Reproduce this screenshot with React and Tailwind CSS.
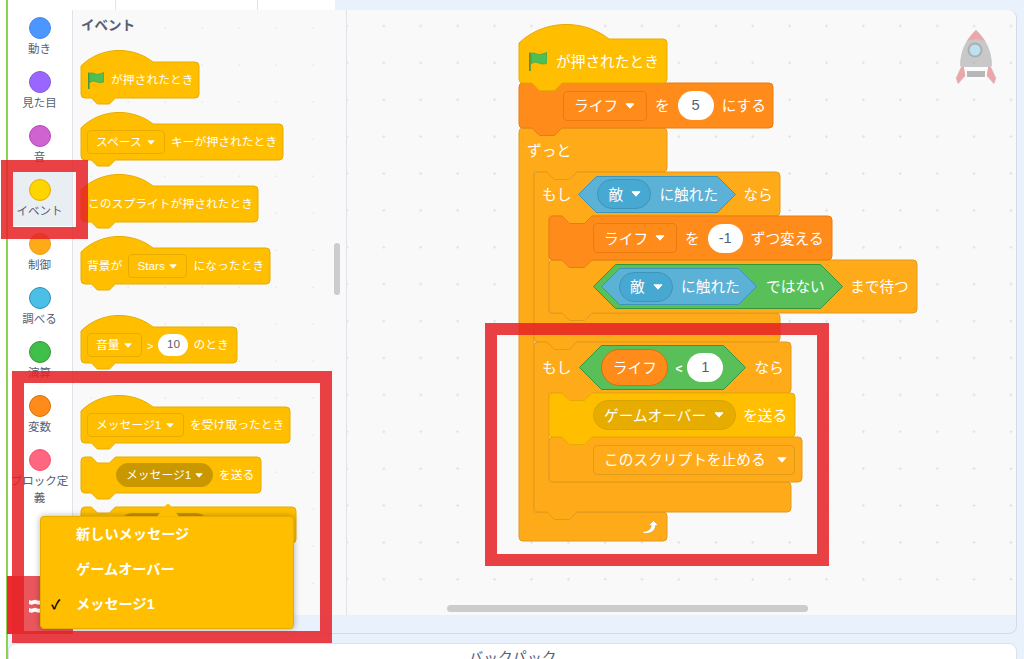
const blockPath = ({ w, h, s = 1, hat, notchTop = true, notchBottom = true, arm }) => {
  const r = 4;
  const nx = 13 * s;
  const nd = 7.5 * s;
  const nf = 15 * s;
  let d = "";
  if (hat) {
    d += `M0 ${r} C${25 * s} ${-20 * s} ${65 * s} ${-20 * s} ${90 * s} 0 `;
  } else {
    d += `M0 ${r} Q0 0 ${r} 0 `;
    if (notchTop) d += `H${nx} l${nd} ${nd} h${nf} l${nd} ${-nd} `;
  }
  d += `H${w - r} Q${w} 0 ${w} ${r} `;
  if (arm) {
    const i = arm.inner;
    d += `V${arm.top - r} Q${w} ${arm.top} ${w - r} ${arm.top} `;
    d += `H${i + nx + nd * 2 + nf} l${-nd} ${nd} h${-nf} l${-nd} ${-nd} H${i} `;
    d += `V${arm.bottom} H${w - r} Q${w} ${arm.bottom} ${w} ${arm.bottom + r} `;
  }
  d += `V${h - r} Q${w} ${h} ${w - r} ${h} `;
  if (notchBottom) d += `H${nx + nd * 2 + nf} l${-nd} ${nd} h${-nf} l${-nd} ${-nd} `;
  d += `H${r} Q0 ${h} 0 ${h - r} Z`;
  return d;
};

const Block = ({ cls, w, h, s, fill, stroke, hat, notchTop, notchBottom, arm, row, children }) => (
  <div className={`absolute ${cls}`}>
    <svg className="absolute left-0 top-0 overflow-visible" width={w} height={h}>
      <path
        d={blockPath({ w, h, s, hat, notchTop, notchBottom, arm })}
        fill={fill}
        stroke={stroke}
        strokeWidth="1"
      />
    </svg>
    <div className={`relative flex items-center whitespace-nowrap text-white [&_span]:pt-[2px] ${row}`}>
      {children}
    </div>
  </div>
);

const EVENT = { fill: "#ffbf00", stroke: "#e6ac00" };
const CONTROL = { fill: "#ffab19", stroke: "#e09a1c" };
const VARIABLE = { fill: "#ff8c1a", stroke: "#e87c10" };

const Caret = ({ small }) => (
  <svg width={small ? 8 : 10} height={small ? 5 : 6} viewBox="0 0 10 6" className="shrink-0">
    <path d="M1 0.8 H9 L5 5.2 Z" fill="#fff" stroke="#fff" strokeWidth="1" strokeLinejoin="round" />
  </svg>
);

const Flag = ({ cls }) => (
  <svg viewBox="0 0 18 19" className={`shrink-0 ${cls}`}>
    <path d="M0 0.5 H1.8 V19 H0 Z" fill="#45993d" />
    <path
      d="M2 1.5 C5 -0.5 8 3 11 2.5 C14 2 16 1 18 0.5 V11 C14 13 11 11.5 8 10.5 C6 10 3.5 10.5 2 12 Z"
      fill="#4cbf56"
      stroke="#45993d"
      strokeWidth="0.6"
    />
  </svg>
);

const Drop = ({ label, cls, small, border = "border-[#e6ac00]" }) => (
  <div className={`flex shrink-0 items-center justify-between rounded-[4px] border ${border} ${cls}`}>
    <span>{label}</span>
    <Caret small={small} />
  </div>
);

const Oval = ({ label, cls, small }) => (
  <div className={`flex shrink-0 items-center justify-between rounded-full border ${cls}`}>
    <span>{label}</span>
    <Caret small={small} />
  </div>
);

const Num = ({ value, cls }) => (
  <div className={`flex shrink-0 items-center justify-center rounded-full bg-white text-[#575e75] ${cls}`}>
    {value}
  </div>
);

const Hex = ({ w, h, fill, stroke, cls, children }) => (
  <div className={`relative flex shrink-0 items-center ${cls}`}>
    <svg className="absolute left-0 top-0" width={w} height={h}>
      <path
        d={`M0.5 ${h / 2} L${h / 2} 0.5 H${w - h / 2} L${w - 0.5} ${h / 2} L${w - h / 2} ${h - 0.5} H${h / 2} Z`}
        fill={fill}
        stroke={stroke}
      />
    </svg>
    <div className="relative flex items-center">{children}</div>
  </div>
);

const TouchEnemy = () => (
  <>
    <Oval label="敵" cls="h-[30px] w-[54px] border-[#3d95bc] bg-[#47a8d1] pl-[10px] pr-[9px]" />
    <span className="ml-[8px]">に触れた</span>
  </>
);

const categories = [
  ["動き", "bg-[#4c97ff]", "border-[#3f87eb]"],
  ["見た目", "bg-[#9966ff]", "border-[#855cd6]"],
  ["音", "bg-[#cf63cf]", "border-[#bd42bd]"],
  ["イベント", "bg-[#ffd500]", "border-[#e6ac00]"],
  ["制御", "bg-[#ffab19]", "border-[#ec9c13]"],
  ["調べる", "bg-[#4cbfe6]", "border-[#2e8eb8]"],
  ["演算", "bg-[#40bf4a]", "border-[#389438]"],
  ["変数", "bg-[#ff8c1a]", "border-[#db6e00]"],
  ["ブロック定義", "bg-[#ff6680]", "border-[#ff4d6a]"],
];

const Sidebar = () => (
  <div className="relative flex w-[64px] shrink-0 flex-col items-center bg-white text-[11.5px] leading-[17px] text-[#575e75]">
    {categories.map(([label, bg, border]) => (
      <div
        key={label}
        className={`flex h-[54px] w-full shrink-0 flex-col items-center pr-[1px] pt-[7px] ${
          label === "イベント" ? "bg-[#e9eef2]" : ""
        }`}
      >
        <div className={`h-[22px] w-[22px] shrink-0 rounded-full border ${bg} ${border}`} />
        <span className="mt-[2px] w-[62px] text-center">{label}</span>
      </div>
    ))}
    {/* extension button */}
    <div className="absolute bottom-[-1px] left-[-1px] flex h-[58px] w-[66px] items-center border-l-[5px] border-[#ee2a30] bg-[#e9575c] pl-[16px] pt-[3px]">
      <svg width="14" height="15" viewBox="0 0 14 15">
        <path d="M1 1 C4 3 6 0 8 1 C10 2 12 2 13 1 V5 C10 7 8 4 6 5 C4 6 3 6 1 5 Z" fill="#fff" />
        <path d="M1 9 C4 11 6 8 8 9 C10 10 12 10 13 9 V13 C10 15 8 12 6 13 C4 14 3 14 1 13 Z" fill="#fff" />
      </svg>
    </div>
  </div>
);

const Palette = () => (
  <div className="relative w-[275px] shrink-0 border-x border-[#dfe3ea] bg-[#f9f9f9] bg-[radial-gradient(#ececec_1px,transparent_1px)] bg-[size:37px_37px] text-[11.8px]">
    <h2 className="pl-[8px] pt-[6px] text-[13.5px] font-bold leading-[20px] text-[#575e75]">イベント</h2>

    <Block cls="left-[8px] top-[52px]" w={118} h={36} s={0.8} hat {...EVENT} row="h-[36px] pl-[7px] gap-[7px]">
      <Flag cls="h-[17px] w-[16px]" />
      <span>が押されたとき</span>
    </Block>

    <Block cls="left-[8px] top-[114px]" w={202} h={36} s={0.8} hat {...EVENT} row="h-[36px] pl-[6px] gap-[6px]">
      <Drop small label="スペース" cls="h-[24px] w-[78px] pl-[8px] pr-[9px]" />
      <span>キーが押されたとき</span>
    </Block>

    <Block cls="left-[8px] top-[176px]" w={177} h={36} s={0.8} hat {...EVENT} row="h-[36px] pl-[7px]">
      <span>このスプライトが押されたとき</span>
    </Block>

    <Block cls="left-[8px] top-[238px]" w={189} h={36} s={0.8} hat {...EVENT} row="h-[36px] pl-[6px] gap-[6px]">
      <span>背景が</span>
      <Drop small label="Stars" cls="h-[24px] w-[59px] pl-[8px] pr-[9px]" />
      <span>になったとき</span>
    </Block>

    <Block cls="left-[8px] top-[317px]" w={156} h={36} s={0.8} hat {...EVENT} row="h-[36px] pl-[6px] gap-[5px]">
      <Drop small label="音量" cls="h-[24px] w-[55px] pl-[8px] pr-[9px]" />
      <span className="text-[11px]">&gt;</span>
      <Num value="10" cls="h-[22px] w-[30px]" />
      <span>のとき</span>
    </Block>

    <Block cls="left-[8px] top-[397px]" w={209} h={36} s={0.8} hat {...EVENT} row="h-[36px] pl-[6px] gap-[6px]">
      <Drop small label="メッセージ1" cls="h-[24px] w-[97px] pl-[8px] pr-[9px]" />
      <span>を受け取ったとき</span>
    </Block>

    <Block cls="left-[8px] top-[447px]" w={180} h={36} s={0.8} {...EVENT} row="h-[36px] pl-[35px] gap-[6px]">
      <Oval small label="メッセージ1" cls="h-[24px] w-[97px] border-[#c99700] bg-[#c99700] pl-[9px] pr-[9px]" />
      <span>を送る</span>
    </Block>

    <Block cls="left-[8px] top-[497px]" w={215} h={36} s={0.8} {...EVENT} row="h-[36px] pl-[39px]">
      <div className="h-[24px] w-[88px] rounded-full bg-[#c99700]" />
    </Block>

    {/* scrollbar */}
    <div className="absolute left-[261px] top-[233px] h-[52px] w-[6px] rounded-full bg-[#cccccc]" />
  </div>
);

const Workspace = () => (
  <div className="relative min-w-0 flex-1 overflow-hidden rounded-tr-[8px] bg-[#f9f9f9] bg-[radial-gradient(#e2e2e2_1px,transparent_1px)] bg-[size:36.9px_36.9px] bg-[position:-18.5px_-2.5px] text-[14.7px]">
    {/* stack order: parents first so children sit on top */}
    <Block
      cls="left-[172px] top-[118px]"
      w={148}
      h={413}
      {...CONTROL}
      notchBottom={false}
      arm={{ inner: 15, top: 44, bottom: 384 }}
      row="h-[44px] pl-[8px]"
    >
      <span>ずっと</span>
    </Block>
    <svg className="absolute left-[295px] top-[510px]" width="17" height="14" viewBox="0 0 17 14">
      <path
        d="M11.5 0.5 L16.5 5.5 H13.6 C13.4 10.5 9 14.5 1.5 13.2 C0.8 13 0.4 11.6 1.2 11.3 C5.5 11.4 8.6 9.8 9.2 5.5 H6.5 Z"
        fill="#fff"
        stroke="#cf8b17"
        strokeWidth="0.5"
      />
    </svg>

    <Block
      cls="left-[187px] top-[162px]"
      w={246}
      h={170}
      {...CONTROL}
      arm={{ inner: 15, top: 44, bottom: 141 }}
      row="h-[44px] pl-[8px]"
    >
      <span>もし</span>
      <Hex w={158} h={37} fill="#5cb1d6" stroke="#3d95bc" cls="ml-[7px] h-[37px] w-[158px] pl-[19px]">
        <TouchEnemy />
      </Hex>
      <span className="ml-[7px]">なら</span>
    </Block>

    <Block cls="left-[202px] top-[250px]" w={368} h={53} {...CONTROL} row="h-[53px] pl-[44px]">
      <Hex w={250} h={45} fill="#59c059" stroke="#389438" cls="h-[45px] w-[250px] pl-[8px]">
        <Hex w={156} h={37} fill="#5cb1d6" stroke="#3d95bc" cls="h-[37px] w-[156px] pl-[18px]">
          <TouchEnemy />
        </Hex>
        <span className="ml-[9px]">ではない</span>
      </Hex>
      <span className="ml-[7px]">まで待つ</span>
    </Block>

    <Block cls="left-[202px] top-[206px]" w={283} h={44} {...VARIABLE} row="h-[44px] pl-[44px] gap-[8px]">
      <Drop label="ライフ" cls="h-[30px] w-[84px] pl-[10px] pr-[11px]" border="border-[#e87c10]" />
      <span>を</span>
      <Num value="-1" cls="h-[29px] w-[35px]" />
      <span>ずつ変える</span>
    </Block>

    <Block
      cls="left-[187px] top-[332px]"
      w={257}
      h={170}
      {...CONTROL}
      arm={{ inner: 15, top: 51, bottom: 140 }}
      row="h-[51px] pl-[8px]"
    >
      <span>もし</span>
      <Hex w={167} h={45} fill="#59c059" stroke="#389438" cls="ml-[8px] h-[45px] w-[167px] pl-[22px]">
        <div className="flex h-[37px] w-[67px] items-center justify-center rounded-full border border-[#db6e00] bg-[#ff8c1a]">
          <span>ライフ</span>
        </div>
        <span className="ml-[7px] text-[12px] font-bold">&lt;</span>
        <Num value="1" cls="ml-[5px] h-[29px] w-[36px]" />
      </Hex>
      <span className="ml-[8px]">なら</span>
    </Block>

    <Block cls="left-[202px] top-[427px]" w={253} h={45} {...CONTROL} notchBottom={false} row="h-[45px] pl-[44px]">
      <Drop label="このスクリプトを止める" cls="h-[30px] w-[202px] pl-[10px] pr-[7px]" border="border-[#e09a1c]" />
    </Block>

    <Block cls="left-[202px] top-[383px]" w={246} h={44} {...EVENT} row="h-[44px] pl-[44px] gap-[7px]">
      <Oval label="ゲームオーバー" cls="h-[30px] w-[143px] border-[#d9a300] bg-[#e6ac00] pl-[10px] pr-[11px]" />
      <span>を送る</span>
    </Block>

    <Block cls="left-[172px] top-[73px]" w={254} h={45} {...VARIABLE} row="h-[45px] pl-[44px] gap-[8px]">
      <Drop label="ライフ" cls="h-[30px] w-[84px] pl-[10px] pr-[11px]" border="border-[#e87c10]" />
      <span>を</span>
      <Num value="5" cls="h-[29px] w-[36px]" />
      <span>にする</span>
    </Block>

    <Block cls="left-[172px] top-[29px]" w={148} h={44} hat {...EVENT} row="h-[44px] pl-[10px] gap-[9px]">
      <Flag cls="h-[19px] w-[18px]" />
      <span>が押されたとき</span>
    </Block>

    {/* sprite in the corner */}
    <svg className="absolute left-[608px] top-[20px] opacity-50" width="42" height="54" viewBox="0 0 42 54">
      <path d="M8 33 L1 48 L3 54 L11 45 Z M34 33 L41 48 L39 54 L31 45 Z" fill="#e0575d" stroke="#aaa" strokeWidth="0.5" />
      <path d="M21 0 C12 8 5 20 5 36 C13 39 29 39 37 36 C37 20 30 8 21 0 Z" fill="#999" />
      <path d="M21 0 C17 4 14 8 12 11 C17 9 25 9 30 11 C28 8 25 4 21 0 Z" fill="#e0575d" />
      <circle cx="20" cy="20" r="7.5" fill="#666" />
      <circle cx="20" cy="20" r="5.5" fill="#7fcdea" />
      <path d="M9 37 H33 L31 50 H11 Z" fill="#fff" />
      <path d="M12 41 H30 V47 H12 Z" fill="#777" />
    </svg>

    {/* scrollbar */}
    <div className="absolute bottom-[3px] left-[100px] h-[7px] w-[361px] rounded-full bg-[#cccccc]" />
  </div>
);

const MessageMenu = () => (
  <div className="absolute left-[40px] top-[503px] w-[254px]">
    <svg className="absolute left-[117px] top-0" width="22" height="14" viewBox="0 0 22 14">
      <path d="M0 13.5 L9 2 Q11 0 13 2 L22 13.5 Z" fill="#ffbf00" />
    </svg>
    <div className="mt-[13px] flex h-[113px] flex-col rounded-[4px] border border-[#e6ac00] bg-[#ffbf00] text-[14.2px] font-bold text-white shadow-[0_0_6px_rgba(0,0,0,0.3)]">
      {["新しいメッセージ", "ゲームオーバー", "メッセージ1"].map((item) => (
        <div key={item} className="relative flex h-[35px] items-center pl-[35px]">
          {item === "メッセージ1" && (
            <span className="absolute left-[10px] text-[13px] text-black">✓</span>
          )}
          {item}
        </div>
      ))}
    </div>
  </div>
);

export default function App() {
  return (
    <div className="relative flex h-screen w-screen overflow-hidden bg-white font-['Liberation_Sans','Noto_Sans_CJK_JP',sans-serif]">
      <div className="w-[6px] shrink-0 bg-white" />
      <div className="w-[2px] shrink-0 bg-[#8fd14f]" />

      <div className="flex min-w-0 flex-1 flex-col bg-[#e9f1fc]">
        {/* tab strip */}
        <div className="flex h-[10px] shrink-0">
          <div className="w-[108px] border-r border-[#dfe3ea] bg-white" />
          <div className="w-[142px] border-r border-[#dfe3ea] bg-white" />
          <div className="w-[77px] bg-white" />
        </div>

        <div className="mr-[7px] flex h-[624px] shrink-0 rounded-r-[8px] border-r border-b border-[#d3dcec]">
          <Sidebar />
          <div className="flex h-[605px] min-w-0 flex-1 overflow-hidden rounded-tr-[8px]">
            <Palette />
            <Workspace />
          </div>
        </div>

        {/* backpack */}
        <div className="mr-[7px] mt-[9px] flex-1 rounded-t-[8px] border border-[#d9e1ee] bg-white pt-[4px] text-center text-[14.8px] leading-[20px] text-[#575e75]">
          バックパック
        </div>
      </div>

      <MessageMenu />

      {/* red highlight frames */}
      <div className="absolute left-[1px] top-[160px] h-[79px] w-[87px] border-[12px] border-[#e62025]/85" />
      <div className="absolute left-[12px] top-[371px] h-[272px] w-[320px] border-[12px] border-[#e62025]/85" />
      <div className="absolute left-[485px] top-[323px] h-[243px] w-[344px] border-[12px] border-[#e62025]/85" />
    </div>
  );
}
